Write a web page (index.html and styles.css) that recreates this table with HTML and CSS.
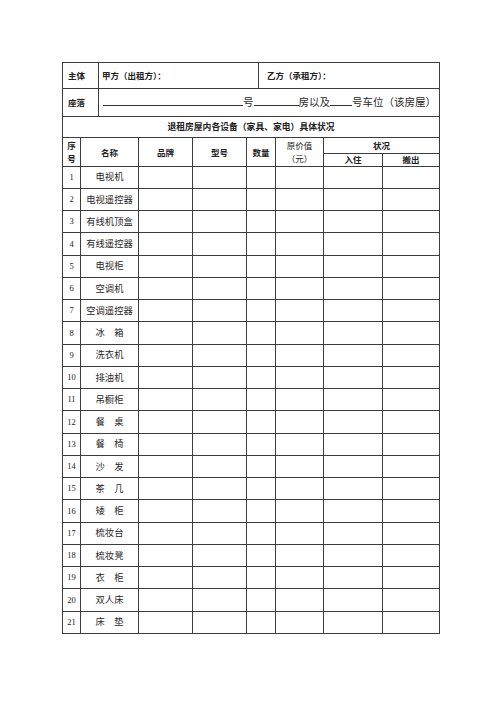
FILE: index.html
```html
<!DOCTYPE html>
<html lang="zh-CN">
<head>
<meta charset="utf-8">
<title>退租房屋设备状况</title>
<link rel="stylesheet" href="styles.css">
</head>
<body>
<div class="page">
  <table class="top">
    <colgroup>
      <col class="c-label">
      <col class="c-jia">
      <col class="c-yi">
    </colgroup>
    <tr class="r-main">
      <th class="label">主体</th>
      <td class="party">甲方（出租方）：</td>
      <td class="party party-yi">乙方（承租方）：</td>
    </tr>
    <tr class="r-addr">
      <th class="label">座落</th>
      <td colspan="2" class="addr"><span class="blank b1"></span>号<span class="blank b2"></span>房以及<span class="blank b3"></span>号车位（该房屋）</td>
    </tr>
    <tr class="r-title">
      <th colspan="3" class="title">退租房屋内各设备（家具、家电）具体状况</th>
    </tr>
  </table>
  <table class="grid">
    <colgroup>
      <col class="g-no">
      <col class="g-name">
      <col class="g-brand">
      <col class="g-model">
      <col class="g-qty">
      <col class="g-price">
      <col class="g-in">
      <col class="g-out">
    </colgroup>
    <thead>
      <tr class="h1">
        <th rowspan="2" class="two no-h">序<br>号</th>
        <th rowspan="2">名称</th>
        <th rowspan="2">品牌</th>
        <th rowspan="2">型号</th>
        <th rowspan="2">数量</th>
        <th rowspan="2" class="two price-h">原价值<br>（元）</th>
        <th colspan="2">状况</th>
      </tr>
      <tr class="h2">
        <th>入住</th>
        <th>搬出</th>
      </tr>
    </thead>
    <tbody>
      <tr><td class="no">1</td><td class="name">电视机</td><td></td><td></td><td></td><td></td><td></td><td></td></tr>
      <tr><td class="no">2</td><td class="name">电视遥控器</td><td></td><td></td><td></td><td></td><td></td><td></td></tr>
      <tr><td class="no">3</td><td class="name">有线机顶盒</td><td></td><td></td><td></td><td></td><td></td><td></td></tr>
      <tr><td class="no">4</td><td class="name">有线遥控器</td><td></td><td></td><td></td><td></td><td></td><td></td></tr>
      <tr><td class="no">5</td><td class="name">电视柜</td><td></td><td></td><td></td><td></td><td></td><td></td></tr>
      <tr><td class="no">6</td><td class="name">空调机</td><td></td><td></td><td></td><td></td><td></td><td></td></tr>
      <tr><td class="no">7</td><td class="name">空调遥控器</td><td></td><td></td><td></td><td></td><td></td><td></td></tr>
      <tr><td class="no">8</td><td class="name">冰　箱</td><td></td><td></td><td></td><td></td><td></td><td></td></tr>
      <tr><td class="no">9</td><td class="name">洗衣机</td><td></td><td></td><td></td><td></td><td></td><td></td></tr>
      <tr><td class="no">10</td><td class="name">排油机</td><td></td><td></td><td></td><td></td><td></td><td></td></tr>
      <tr><td class="no">11</td><td class="name">吊橱柜</td><td></td><td></td><td></td><td></td><td></td><td></td></tr>
      <tr><td class="no">12</td><td class="name">餐　桌</td><td></td><td></td><td></td><td></td><td></td><td></td></tr>
      <tr><td class="no">13</td><td class="name">餐　椅</td><td></td><td></td><td></td><td></td><td></td><td></td></tr>
      <tr><td class="no">14</td><td class="name">沙　发</td><td></td><td></td><td></td><td></td><td></td><td></td></tr>
      <tr><td class="no">15</td><td class="name">茶　几</td><td></td><td></td><td></td><td></td><td></td><td></td></tr>
      <tr><td class="no">16</td><td class="name">矮　柜</td><td></td><td></td><td></td><td></td><td></td><td></td></tr>
      <tr><td class="no">17</td><td class="name">梳妆台</td><td></td><td></td><td></td><td></td><td></td><td></td></tr>
      <tr><td class="no">18</td><td class="name">梳妆凳</td><td></td><td></td><td></td><td></td><td></td><td></td></tr>
      <tr><td class="no">19</td><td class="name">衣　柜</td><td></td><td></td><td></td><td></td><td></td><td></td></tr>
      <tr><td class="no">20</td><td class="name">双人床</td><td></td><td></td><td></td><td></td><td></td><td></td></tr>
      <tr><td class="no">21</td><td class="name">床　垫</td><td></td><td></td><td></td><td></td><td></td><td></td></tr>
    </tbody>
  </table>
</div>
</body>
</html>
```

FILE: styles.css
```css
html, body {
  margin: 0;
  padding: 0;
  background: #ffffff;
}

.page {
  padding: 62px 0 0 62px;
  font-family: "Noto Sans CJK SC", "Noto Sans", sans-serif;
  color: #222222;
}

table {
  border-collapse: collapse;
  table-layout: fixed;
  width: 377px;
}

th, td {
  border: 1px solid #3c3c3c;
  padding: 0;
  overflow: hidden;
  white-space: nowrap;
}

/* ---- top block ---- */
.c-label { width: 36px; }
.c-jia { width: 160px; }
.c-yi { width: 181px; }

.top th, .top td {
  font-size: 8.5px;
  line-height: 1;
  text-align: left;
  vertical-align: middle;
}

.top .label {
  font-weight: 700;
  padding-left: 5px;
}

.r-main { height: 26px; }
.r-addr { height: 28px; }
.r-title { height: 21px; }

.party {
  font-weight: 700;
  padding-left: 3px;
}

.party-yi {
  padding-left: 8px;
}

.top .addr {
  font-size: 10.5px;
  padding-left: 4px;
  color: #2a2a2a;
}

.blank {
  display: inline-block;
  border-bottom: 1px solid #333333;
  height: 1px;
}

.b1 { width: 140px; }
.b2 { width: 45px; }
.b3 { width: 22px; }

.top .title {
  text-align: center;
  font-weight: 700;
  font-size: 8.8px;
}

/* ---- grid ---- */
.grid thead tr.h1 th { border-top: none; }

.g-no { width: 18px; }
.g-name { width: 58px; }
.g-brand { width: 54px; }
.g-model { width: 54px; }
.g-qty { width: 29px; }
.g-price { width: 48px; }
.g-in { width: 59px; }
.g-out { width: 57px; }

.grid th {
  font-size: 8.5px;
  font-weight: 700;
  line-height: 1;
  text-align: center;
  vertical-align: middle;
}

.grid .h1 { height: 15px; }
.grid .h2 { height: 13px; }

.grid .h1 th.two {
  line-height: 13px;
}

.grid .h1 th.price-h { font-weight: 400; }

.grid tbody tr { height: 22.25px; }

.grid td {
  text-align: center;
  vertical-align: middle;
  font-size: 9.3px;
  line-height: 1;
}

.grid td.no {
  font-family: "Liberation Serif", "DejaVu Serif", serif;
  font-size: 8.5px;
}

.grid td.name {
  color: #2a2a2a;
}
```
